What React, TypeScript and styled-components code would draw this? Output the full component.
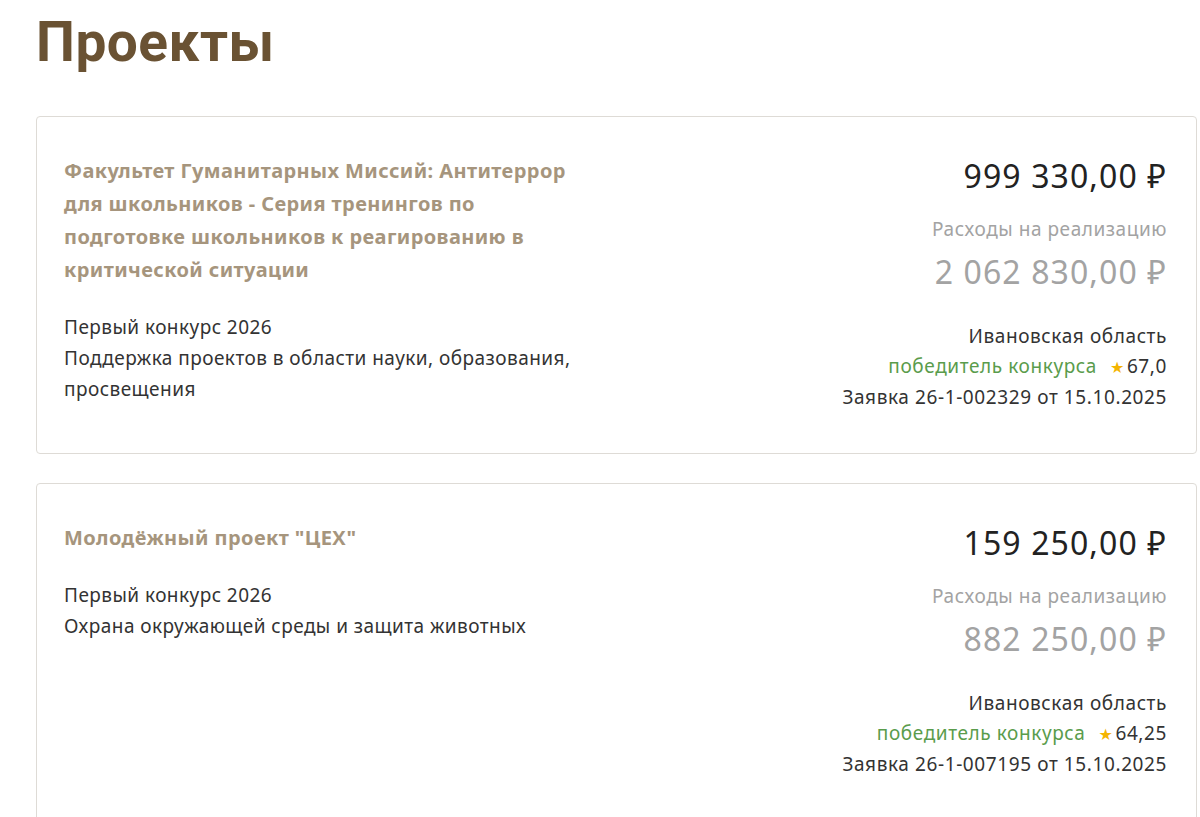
import React from 'react';
import styled, { createGlobalStyle } from 'styled-components';

interface Project {
  title: string;
  contest: string;
  direction: string;
  amount: string;
  total: string;
  region: string;
  status: string;
  score: string;
  request: string;
}

const projects: Project[] = [
  {
    title:
      'Факультет Гуманитарных Миссий: Антитеррор для школьников - Серия тренингов по подготовке школьников к реагированию в критической ситуации',
    contest: 'Первый конкурс 2026',
    direction: 'Поддержка проектов в области науки, образования, просвещения',
    amount: '999 330,00 ₽',
    total: '2 062 830,00 ₽',
    region: 'Ивановская область',
    status: 'победитель конкурса',
    score: '67,0',
    request: 'Заявка 26-1-002329 от 15.10.2025',
  },
  {
    title: 'Молодёжный проект "ЦЕХ"',
    contest: 'Первый конкурс 2026',
    direction: 'Охрана окружающей среды и защита животных',
    amount: '159 250,00 ₽',
    total: '882 250,00 ₽',
    region: 'Ивановская область',
    status: 'победитель конкурса',
    score: '64,25',
    request: 'Заявка 26-1-007195 от 15.10.2025',
  },
];

const GlobalStyle = createGlobalStyle`
  html, body {
    margin: 0;
    padding: 0;
    background: #ffffff;
  }
  body {
    font-family: "Noto Sans", "Open Sans", "DejaVu Sans", sans-serif;
    color: #333;
  }
`;

const Page = styled.div`
  padding: 0 3px 0 36px;
`;

const Heading = styled.h1`
  margin: 0;
  padding-top: 10px;
  font-family: Roboto, "Noto Sans", sans-serif;
  font-size: 55px;
  line-height: 64px;
  font-weight: 700;
  color: #6a5233;
  letter-spacing: 0.5px;
`;

const List = styled.div`
  display: flex;
  flex-direction: column;
  gap: 29px;
  margin-top: 42px;
`;

const Card = styled.div`
  display: flex;
  justify-content: space-between;
  align-items: flex-start;
  border: 1px solid #dedbd6;
  border-radius: 4px;
  padding: 38px 29px 41px 27px;
  background: #fff;
`;

const Left = styled.div`
  width: 520px;
`;

const Title = styled.div`
  margin-top: -1px;
  font-size: 20px;
  line-height: 33px;
  font-weight: 700;
  color: #a6957d;
  letter-spacing: 0.4px;
`;

const Meta = styled.div`
  margin-top: 26px;
  font-size: 19px;
  line-height: 31px;
  letter-spacing: 0.45px;
  color: #333;
`;

const Right = styled.div`
  display: flex;
  flex-direction: column;
  align-items: flex-end;
  text-align: right;
`;

const Amount = styled.div<{ $muted?: boolean }>`
  margin-top: ${({ $muted }) => ($muted ? '10px' : '0')};
  font-size: 32px;
  line-height: 42px;
  letter-spacing: 1.1px;
  color: ${({ $muted }) => ($muted ? '#a3a3a3' : '#222')};
`;

const Caption = styled.div`
  margin-top: 20px;
  font-size: 19px;
  line-height: 24px;
  letter-spacing: 0.55px;
  color: #a3a3a3;
`;

const Info = styled.div`
  margin-top: 28px;
  font-size: 19px;
  line-height: 30px;
  letter-spacing: 0.6px;
  color: #333;
`;

const StatusRow = styled.div`
  display: flex;
  align-items: baseline;
  justify-content: flex-end;
`;

const Status = styled.span`
  color: #5a9c4c;
  margin-right: 13px;
`;

const Star = styled.span`
  color: #f4b400;
  font-size: 16px;
  margin-right: 2px;
`;

const ProjectCard: React.FC<{ project: Project }> = ({ project }) => (
  <Card>
    <Left>
      <Title>{project.title}</Title>
      <Meta>
        <div>{project.contest}</div>
        <div>{project.direction}</div>
      </Meta>
    </Left>
    <Right>
      <Amount>{project.amount}</Amount>
      <Caption>Расходы на реализацию</Caption>
      <Amount $muted>{project.total}</Amount>
      <Info>
        <div>{project.region}</div>
        <StatusRow>
          <Status>{project.status}</Status>
          <Star>★</Star>
          <span>{project.score}</span>
        </StatusRow>
        <div>{project.request}</div>
      </Info>
    </Right>
  </Card>
);

export default function App() {
  return (
    <Page>
      <GlobalStyle />
      <Heading>Проекты</Heading>
      <List>
        {projects.map((p) => (
          <ProjectCard key={p.request} project={p} />
        ))}
      </List>
    </Page>
  );
}
